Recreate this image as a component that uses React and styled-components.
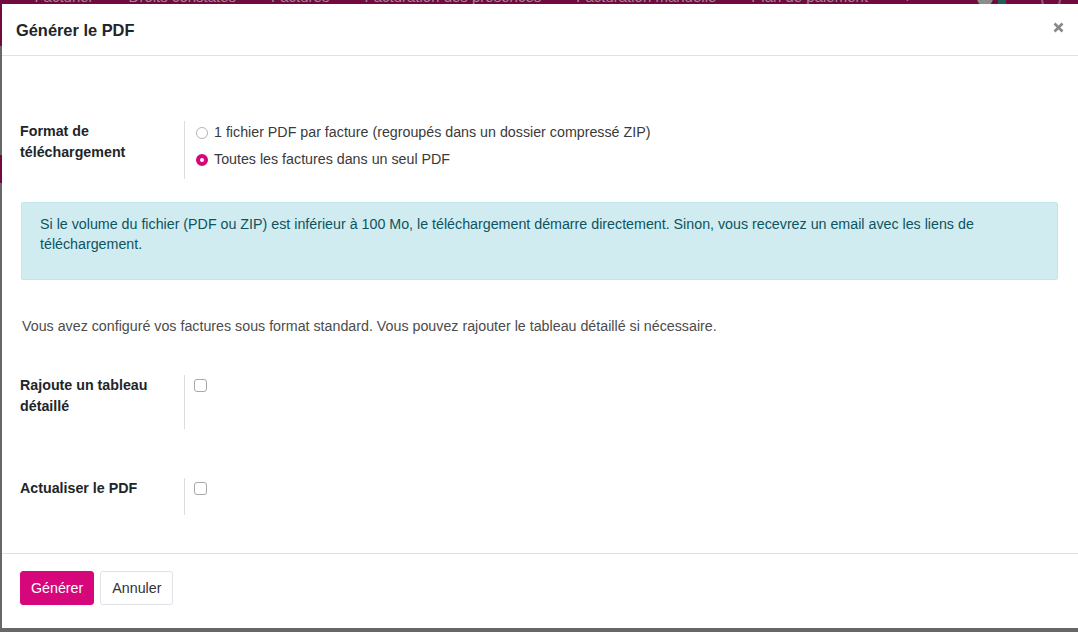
import React from 'react';
import styled, { createGlobalStyle } from "styled-components";

const GlobalStyle = createGlobalStyle`
    html, body {
        margin: 0;
        padding: 0;
        height: 100%;
        overflow: hidden;
    }
    body {
        font-family: "Liberation Sans", Arial, sans-serif;
        font-size: 14.25px;
        background: #676767;
    }
`;

const navItems = [
    "Inscription",
    "Facturier",
    "Droits constatés",
    "Factures",
    "Facturation des présences",
    "Facturation manuelle",
    "Plan de paiement",
];

export default function App() {
    return (
        <Page>
            <GlobalStyle />
            <Navbar>
                {navItems.map((item, i) => (
                    <NavItem key={item} first={i === 0}>{item}</NavItem>
                ))}
                <NavItem>+</NavItem>
                <NavAvatar />
                <NavDot />
                <NavRing />
            </Navbar>
            <Backdrop>
                <SideTab />
            </Backdrop>

            <Modal role="dialog">
                <Header>
                    <h4>Générer le PDF</h4>
                    <CloseButton aria-label="Fermer">
                        <svg width="11" height="11" viewBox="0 0 11 11">
                            <path d="M1.5 1.5 L9.5 9.5 M9.5 1.5 L1.5 9.5" stroke="#888" strokeWidth="2.6" />
                        </svg>
                    </CloseButton>
                </Header>

                <Body>
                    <FieldRow>
                        <Label pad={16}>Format de<br />téléchargement</Label>
                        <Value>
                            <Option>
                                <Radio type="radio" name="format" />
                                1 fichier PDF par facture (regroupés dans un dossier compressé ZIP)
                            </Option>
                            <Option>
                                <Radio type="radio" name="format" defaultChecked />
                                Toutes les factures dans un seul PDF
                            </Option>
                        </Value>
                    </FieldRow>

                    <Alert>
                        Si le volume du fichier (PDF ou ZIP) est inférieur à 100 Mo, le téléchargement démarre directement. Sinon, vous recevrez un email avec les liens de téléchargement.
                    </Alert>

                    <Note>
                        Vous avez configuré vos factures sous format standard. Vous pouvez rajouter le tableau détaillé si nécessaire.
                    </Note>

                    <FieldRow>
                        <Label pad={12}>Rajoute un tableau<br />détaillé</Label>
                        <Value>
                            <Checkbox type="checkbox" />
                        </Value>
                    </FieldRow>

                    <FieldRow gap={49}>
                        <Label pad={16}>Actualiser le PDF</Label>
                        <Value>
                            <Checkbox type="checkbox" />
                        </Value>
                    </FieldRow>
                </Body>

                <Footer>
                    <Button primary>Générer</Button>
                    <Button>Annuler</Button>
                </Footer>
            </Modal>
        </Page>
    )
}

const Page = styled.div`
    position: relative;
    width: 100vw;
    height: 100vh;
    overflow: hidden;
    background: #676767;
`;

const Navbar = styled.nav`
    height: 46px;
    background: #720a40;
    display: flex;
    align-items: flex-start;
    gap: 35px;
    overflow: hidden;
`;

const NavItem = styled.span`
    color: #9c8a94;
    font-size: 15px;
    line-height: 18px;
    margin-top: -12px;
    margin-left: ${p => (p.first ? "-69px" : "0")};
    white-space: nowrap;
`;

const NavAvatar = styled.span`
    width: 16px;
    height: 16px;
    margin-top: -10px;
    margin-left: 30px;
    border-radius: 50%;
    background: #8c8c8c;
`;

const NavDot = styled.span`
    width: 8px;
    height: 10px;
    margin-top: -4px;
    margin-left: -30px;
    background: #1f5f55;
`;

const NavRing = styled.span`
    width: 16px;
    height: 16px;
    margin-top: -10px;
    border-radius: 50%;
    border: 2px solid #8d5f78;
`;

const Backdrop = styled.div`
    position: relative;
    height: calc(100% - 46px);
`;

const SideTab = styled.div`
    position: absolute;
    left: 0;
    top: 109px;
    width: 6px;
    height: 28px;
    background: #720a40;
`;

const Modal = styled.div`
    position: absolute;
    top: 4px;
    left: 2px;
    right: 0;
    bottom: 4px;
    background: #fff;
    display: flex;
    flex-direction: column;
    color: #4c4c4c;
`;

const Header = styled.header`
    height: 51px;
    border-bottom: 1px solid #e2e2e2;
    display: flex;
    align-items: center;
    justify-content: space-between;
    padding: 0 14px;
    h4 {
        margin: 0;
        font-size: 16.4px;
        font-weight: bold;
        color: #212529;
        padding-top: 1px;
    }
`;

const CloseButton = styled.button`
    border: none;
    background: none;
    padding: 0;
    margin-top: -4px;
    width: 11px;
    height: 11px;
    display: flex;
    cursor: pointer;
`;

const Body = styled.div`
    flex: 1;
    padding: 65px 20px 0 19px;
    display: flex;
    flex-direction: column;
`;

const FieldRow = styled.div`
    display: grid;
    grid-template-columns: 165px 1fr;
    margin-top: ${p => p.gap || 0}px;
    margin-left: -1px;
`;

const Label = styled.div`
    font-weight: bold;
    color: #212529;
    line-height: 21px;
    padding-bottom: ${p => p.pad || 0}px;
    border-right: 1px solid #dcdcdc;
`;

const Value = styled.div`
    padding-left: 8px;
    display: flex;
    flex-direction: column;
    gap: 5px;
`;

const Option = styled.label`
    display: flex;
    align-items: center;
    gap: 6px;
    line-height: 21px;
    color: #3a3a3a;
    padding-top: 1px;
`;

const Radio = styled.input`
    appearance: none;
    margin: 0 0 0 3px;
    width: 12px;
    height: 12px;
    border-radius: 50%;
    border: 1px solid #b5b5b5;
    background: #fff;
    &:checked {
        border: 4px solid #d6077a;
    }
`;

const Checkbox = styled.input`
    appearance: none;
    margin: 4px 0 0 1px;
    width: 13px;
    height: 13px;
    border-radius: 3px;
    border: 1px solid #a8a8a8;
    background: #fff;
`;

const Alert = styled.div`
    margin-top: 23px;
    background: #d1ecf1;
    border: 1px solid #c3e6ec;
    border-radius: 2px;
    color: #0c5460;
    line-height: 20px;
    padding: 11px 40px 25px 18px;
`;

const Note = styled.p`
    margin: 36px 0 39px 1px;
    line-height: 20px;
    color: #4c4c4c;
`;

const Footer = styled.footer`
    border-top: 1px solid #e2e2e2;
    padding: 17px 18px 23px;
    display: flex;
    gap: 6px;
`;

const Button = styled.button`
    font-family: inherit;
    font-size: 14.25px;
    height: 34px;
    padding: 0 ${p => (p.primary ? "10px" : "11px")};
    border-radius: 3px;
    border: 1px solid ${p => (p.primary ? "#d6077a" : "#dee2e6")};
    background: ${p => (p.primary ? "#d6077a" : "#fff")};
    color: ${p => (p.primary ? "#fff" : "#333")};
    cursor: pointer;
`;
